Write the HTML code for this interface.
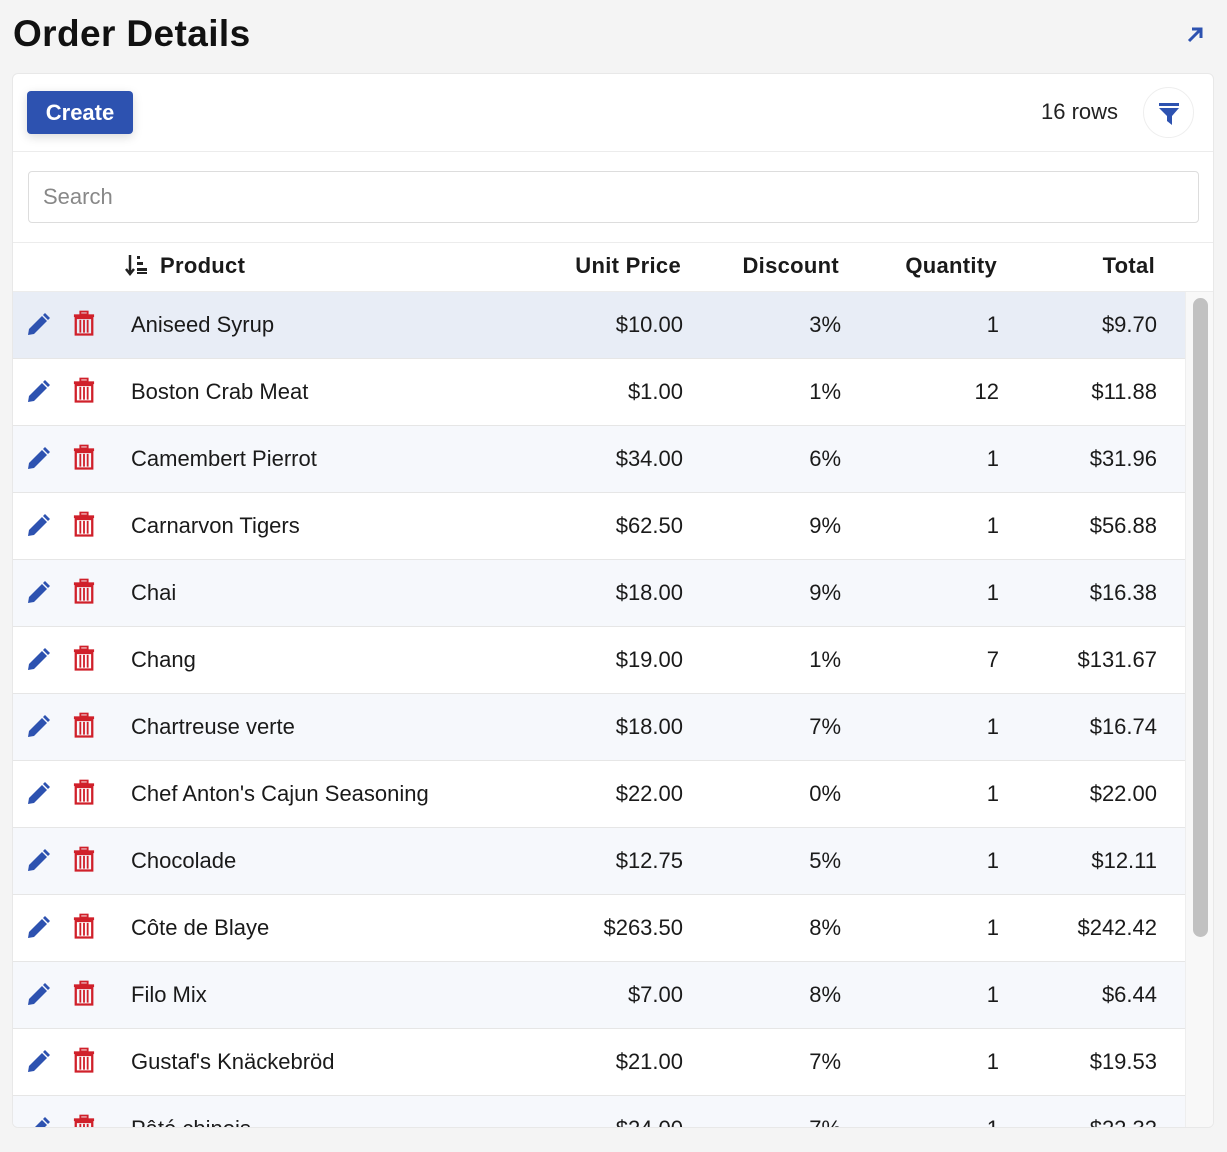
<!DOCTYPE html>
<html><head><meta charset="utf-8"><style>
*{box-sizing:border-box;margin:0;padding:0}
body{width:1227px;height:1152px;background:#f4f4f4;font-family:"Liberation Sans","DejaVu Sans",sans-serif;color:#222;position:relative;overflow:hidden}
h1{position:absolute;left:13px;top:13px;font-size:37px;font-weight:bold;color:#111;letter-spacing:0.4px}
.ext{position:absolute;left:1185px;top:25px}
.card{position:absolute;left:12px;top:73px;width:1202px;height:1055px;background:#fff;border:1px solid #e8e8e8;border-radius:6px;overflow:hidden}
.create{position:absolute;left:14px;top:17px;width:106px;height:43px;background:#2d52b0;color:#fff;border-radius:4px;font-size:22px;font-weight:bold;text-align:center;line-height:43px;box-shadow:0 3px 10px rgba(0,0,0,.15)}
.rows{position:absolute;left:1028px;top:25px;font-size:22px;color:#222}
.filt{position:absolute;left:1130px;top:13px;width:51px;height:51px;border:1px solid #eee;border-radius:50%}
.sep{position:absolute;left:0;width:100%;height:1px;background:#ececec}
.search{position:absolute;left:15px;top:97px;width:1171px;height:52px;border:1px solid #ddd;border-radius:4px;font-size:22px;color:#888;padding:12px 14px}
.hdr{position:absolute;top:179px;font-size:22px;font-weight:bold;color:#1a1a1a;letter-spacing:0.3px}
.row{position:absolute;left:0;width:1172px;height:67px;border-bottom:1px solid #e6e6e6;font-size:22px;color:#1a1a1a}
.row span{position:absolute;top:20px}
.sb{position:absolute;left:1172px;top:218px;width:30px;height:840px;background:#f8f8f8;border-left:1px solid #eee}
.thumb{position:absolute;left:1180px;top:224px;width:15px;height:639px;background:#c1c1c1;border-radius:8px}
</style></head><body>
<h1>Order Details</h1>
<svg class="ext" width="20" height="20" viewBox="0 0 20 20"><path d="M4 16 L15 5 M7 4 H16 V13" stroke="#2d52b0" stroke-width="3" fill="none"/></svg>
<div class="card">
<div class="create">Create</div>
<div class="rows">16 rows</div>
<div class="filt"><svg width="51" height="51" viewBox="0 0 51 51"><rect x="15" y="15" width="20" height="3" fill="#2d52b0"/><path d="M15 20 H35 L28 28 V37 L23 33 V28 Z" fill="#2d52b0"/></svg></div>
<div class="sep" style="top:77px"></div>
<div class="search">Search</div>
<div class="sep" style="top:168px"></div>
<svg style="position:absolute;left:112px;top:180px" width="24" height="22" viewBox="0 0 24 22"><path d="M5 1 V19 M1 15 L5 20 L9 15" stroke="#222" stroke-width="2.5" fill="none"/><rect x="12" y="2" width="3" height="3" fill="#222"/><rect x="12" y="8" width="6" height="3" fill="#222"/><rect x="12" y="14" width="10" height="3" fill="#222"/><rect x="12" y="18" width="10" height="2" fill="#222"/></svg>
<div class="hdr" style="left:147px">Product</div>
<div class="hdr" style="right:532px">Unit Price</div>
<div class="hdr" style="right:374px">Discount</div>
<div class="hdr" style="right:216px">Quantity</div>
<div class="hdr" style="right:58px">Total</div>
<div class="sep" style="top:217px"></div>
<div id="body"></div>
<div class="sb"></div><div class="thumb"></div>
</div>
<script>
var d=[["Aniseed Syrup","$10.00","3%","1","$9.70"],["Boston Crab Meat","$1.00","1%","12","$11.88"],["Camembert Pierrot","$34.00","6%","1","$31.96"],["Carnarvon Tigers","$62.50","9%","1","$56.88"],["Chai","$18.00","9%","1","$16.38"],["Chang","$19.00","1%","7","$131.67"],["Chartreuse verte","$18.00","7%","1","$16.74"],["Chef Anton's Cajun Seasoning","$22.00","0%","1","$22.00"],["Chocolade","$12.75","5%","1","$12.11"],["Côte de Blaye","$263.50","8%","1","$242.42"],["Filo Mix","$7.00","8%","1","$6.44"],["Gustaf's Knäckebröd","$21.00","7%","1","$19.53"],["Pâté chinois","$24.00","7%","1","$22.32"]];
var pen='<svg style="position:absolute;left:12px;top:20px" width="26" height="26" viewBox="0 0 26 26"><path d="M3 23 L4 17 L17 4 L22 9 L9 22 Z" fill="#2d52b0"/><path d="M18 3 L20 1 L25 6 L23 8 Z" fill="#2d52b0"/></svg>';
var bin='<svg style="position:absolute;left:60px;top:18px" width="22" height="27" viewBox="0 0 24 28"><rect x="8" y="1" width="8" height="3" fill="none" stroke="#d0202a" stroke-width="2"/><rect x="1" y="4" width="22" height="3" fill="#d0202a"/><path d="M3 8 H21 V26 H3 Z" fill="none" stroke="#d0202a" stroke-width="2.5"/><path d="M8 10 V24 M12 10 V24 M16 10 V24" stroke="#d0202a" stroke-width="2"/></svg>';
var h='';
d.forEach(function(r,i){var bg=i==0?'#e8edf6':(i%2==0?'#f6f8fc':'#fff');
h+='<div class="row" style="top:'+(218+i*67)+'px;background:'+bg+'">'+pen+bin+'<span style="left:118px">'+r[0]+'</span><span style="right:502px">'+r[1]+'</span><span style="right:344px">'+r[2]+'</span><span style="right:186px">'+r[3]+'</span><span style="right:28px">'+r[4]+'</span></div>';});
document.getElementById('body').innerHTML=h;
</script>
</body></html>
